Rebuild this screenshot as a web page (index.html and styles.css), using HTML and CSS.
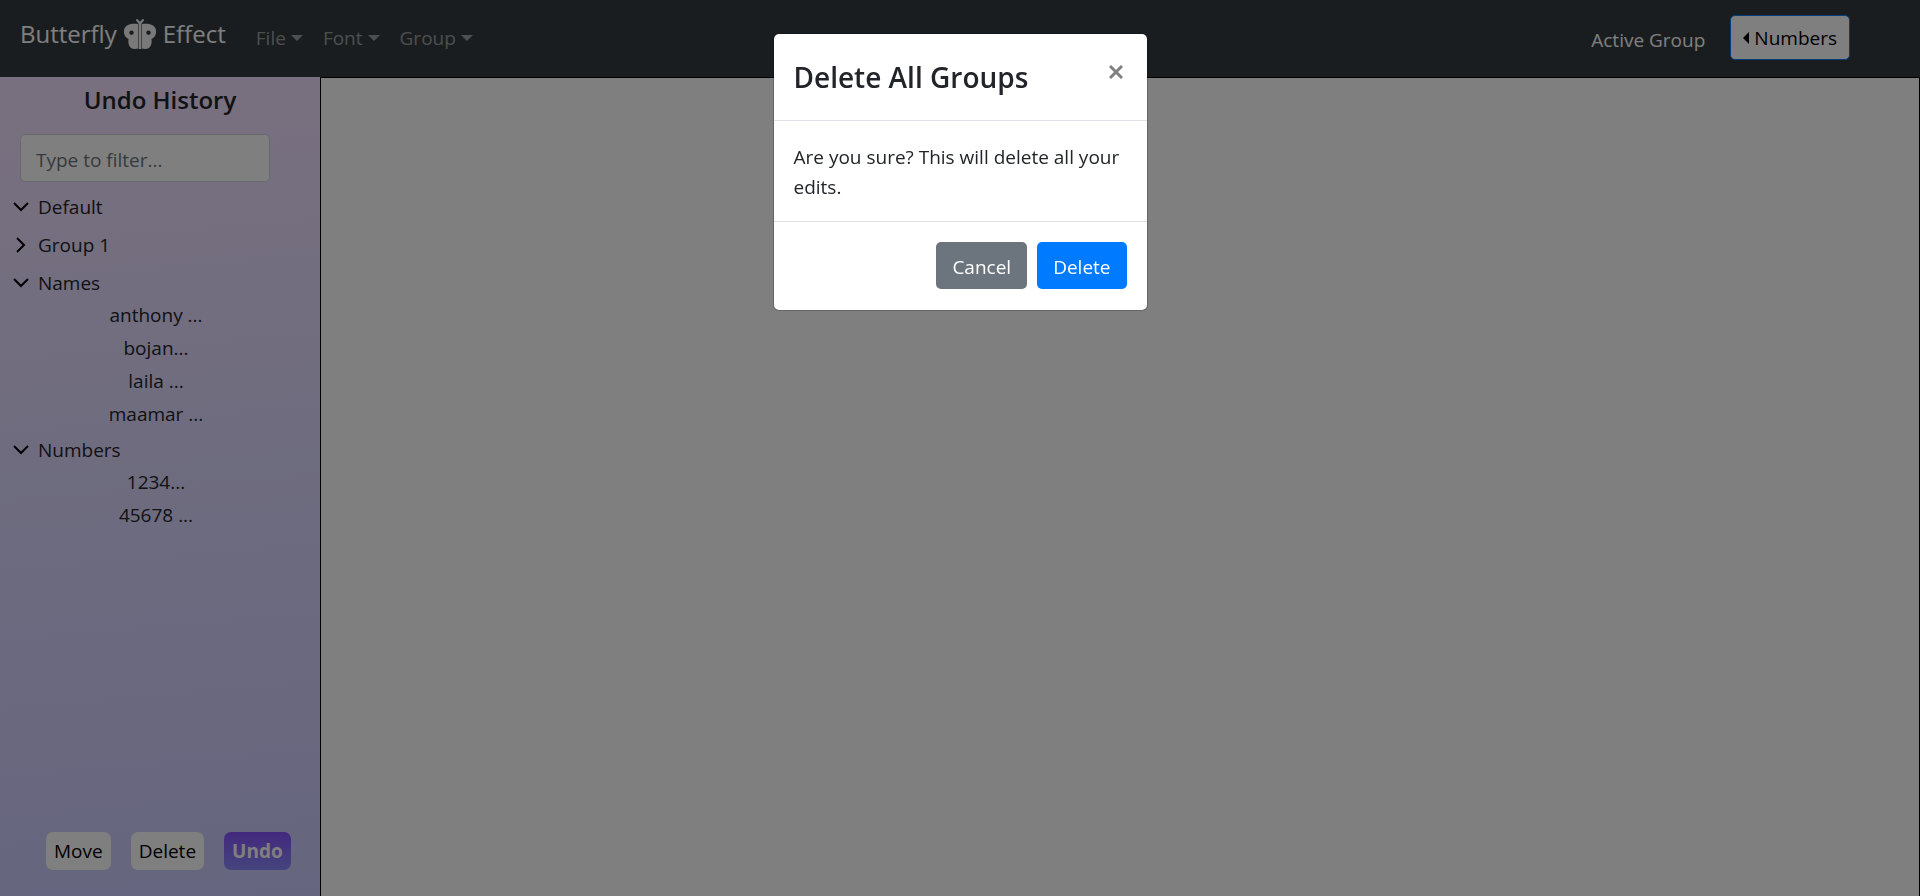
FILE: index.html
```html
<!DOCTYPE html>
<html lang="en">
<head>
<meta charset="utf-8">
<title>Butterfly Effect</title>
<link rel="stylesheet" href="styles.css">
</head>
<body>
<div class="app">
  <header class="navbar">
    <a class="brand" href="#">Butterfly
      <svg class="brand-icon" viewBox="0 0 34 32" aria-hidden="true">
        <path class="wing" fill-rule="evenodd" d="M15 6C11 5.500 8 5.500 5 7C2 8.500 .5 11 1 15C1.500 18 3 20 5.500 21C5 24 5.500 28 8 30C10 31.300 13 31 15 30.500ZM8.500 12.500a2.200 2.200 0 1 0 .01 0Z"/>
        <path class="wing" fill-rule="evenodd" d="M19 6C23 5.500 26 5.500 29 7C32 8.500 33.500 11 33 15C32.500 18 31 20 28.500 21C29 24 28.500 28 26 30C24 31.300 21 31 19 30.500ZM25.500 12.500a2.200 2.200 0 1 0 .01 0Z"/>
        <path class="wing" d="M15.600 4h2.800v27h-2.800z"/>
        <path class="antenna" d="M17 5.500L14 2M17 5.500L20 2"/>
      </svg>
      Effect</a>
    <nav class="menu">
      <button class="menu-item" type="button">File<span class="caret"></span></button>
      <button class="menu-item" type="button">Font<span class="caret"></span></button>
      <button class="menu-item" type="button">Group<span class="caret"></span></button>
    </nav>
    <div class="active-group">
      <span class="active-label">Active Group</span>
      <button class="group-button" type="button"><span class="caret-left"></span>Numbers</button>
    </div>
  </header>
  <div class="workspace">
    <aside class="sidebar">
      <h2 class="sidebar-title">Undo History</h2>
      <input class="filter" type="text" placeholder="Type to filter..." aria-label="Type to filter">
      <ul class="tree">
        <li><button class="group" type="button"><svg class="chevron" viewBox="0 0 16 16"><path d="M1 4l7 7 7-7"/></svg>Default</button></li>
        <li><button class="group" type="button"><svg class="chevron" viewBox="0 0 16 16"><path d="M4 1l7 7-7 7"/></svg>Group 1</button></li>
        <li><button class="group" type="button"><svg class="chevron" viewBox="0 0 16 16"><path d="M1 4l7 7 7-7"/></svg>Names</button>
          <ul class="edits">
            <li>anthony ...</li>
            <li>bojan...</li>
            <li>laila ...</li>
            <li>maamar ...</li>
          </ul>
        </li>
        <li><button class="group" type="button"><svg class="chevron" viewBox="0 0 16 16"><path d="M1 4l7 7 7-7"/></svg>Numbers</button>
          <ul class="edits">
            <li>1234...</li>
            <li>45678 ...</li>
          </ul>
        </li>
      </ul>
      <div class="actions">
        <button class="action" type="button">Move</button>
        <button class="action" type="button">Delete</button>
        <button class="action action-undo" type="button">Undo</button>
      </div>
    </aside>
    <main class="editor"></main>
  </div>
</div>
<div class="backdrop">
  <section class="modal" role="dialog" aria-modal="true" aria-labelledby="modal-title">
    <div class="modal-header">
      <h1 class="modal-title" id="modal-title">Delete All Groups</h1>
      <button class="close" type="button" aria-label="Close"><svg viewBox="0 0 14 14"><path d="M1 1l12 12M13 1L1 13"/></svg></button>
    </div>
    <p class="modal-body">Are you sure? This will delete all your edits.</p>
    <div class="modal-footer">
      <button class="btn btn-secondary" type="button">Cancel</button>
      <button class="btn btn-primary" type="button">Delete</button>
    </div>
  </section>
</div>
</body>
</html>
```

FILE: styles.css
```css
* { box-sizing: border-box; }

body {
  margin: 0;
  color: #212529;
  font: 19px/30px "Open Sans", "Noto Sans", sans-serif;
}

button, input { font: inherit; color: inherit; }
button { border: 0; background: none; padding: 0; }
ul { list-style: none; margin: 0; padding: 0; }

.app {
  display: flex;
  flex-direction: column;
  height: 100vh;
}

.navbar {
  display: flex;
  align-items: center;
  height: 77px;
  padding: 0 70px 2px 20px;
  background: #343a40;
}

.brand {
  display: flex;
  align-items: center;
  gap: 6px;
  padding-bottom: 8px;
  color: #fff;
  font-size: 24px;
  text-decoration: none;
}
.brand-icon { width: 34px; height: 32px; }
.wing { fill: #f2f2f2; }
.antenna { fill: none; stroke: #f2f2f2; stroke-width: 2; stroke-linecap: round; }

.menu {
  display: flex;
  gap: 20px;
  margin-left: 30px;
  color: rgba(255, 255, 255, .5);
}
.menu-item { display: flex; align-items: center; gap: 5px; }
.caret {
  border: 6px solid transparent;
  border-top-color: currentColor;
  border-bottom: 0;
}

.active-group {
  display: flex;
  align-items: center;
  gap: 25px;
  margin-left: auto;
}
.active-label { color: #fff; padding-top: 4px; }
.group-button {
  display: flex;
  align-items: center;
  gap: 5px;
  height: 45px;
  padding: 0 12px;
  border: 1px solid #007bff;
  border-radius: 5px;
  background: #fff;
  color: #000;
}
.caret-left {
  border: 6px solid transparent;
  border-right-color: currentColor;
  border-left: 0;
}

.workspace { display: flex; flex: 1; min-height: 0; }

.sidebar {
  display: flex;
  flex-direction: column;
  width: 320px;
  background: linear-gradient(175deg, #f3e1ff, #e2dbff 35%, #cbcbff);
}
.sidebar-title {
  margin: 8px 0 19px;
  font-size: 24px;
  font-weight: 600;
  line-height: 30px;
  text-align: center;
}
.filter {
  width: 250px;
  height: 48px;
  margin-left: 20px;
  padding: 4px 15px 0;
  border: 1px solid #ced4da;
  border-radius: 5px;
  background: #fff;
}
.filter::placeholder { color: #6c757d; opacity: 1; }

.tree { padding: 6px 21px 0 13px; }
.group {
  display: flex;
  align-items: center;
  gap: 9px;
  height: 38px;
}
.chevron {
  width: 16px;
  height: 16px;
  fill: none;
  stroke: #000;
  stroke-width: 2;
}
.edits { margin-top: -3px; text-align: center; line-height: 33px; }

.actions {
  display: flex;
  gap: 20px;
  margin: auto 0 26px 46px;
}
.action {
  height: 38px;
  padding: 0 8px;
  border-radius: 7px;
  background: #fff;
  color: #000;
}
.action-undo {
  background: linear-gradient(#8652fa, #8a8afc);
  color: #fff;
  font-weight: 700;
}

.editor {
  flex: 1;
  border: 1px solid #000;
  border-bottom: 0;
  background: #fff;
}

.backdrop {
  position: fixed;
  inset: 0;
  padding-top: 33px;
  background: rgba(0, 0, 0, .5);
}
.modal {
  width: 375px;
  margin: 0 auto;
  border: 1px solid rgba(0, 0, 0, .2);
  border-radius: 6px;
  background: #fff;
  background-clip: padding-box;
}
.modal-header {
  display: flex;
  align-items: flex-start;
  justify-content: space-between;
  padding: 20px;
  border-bottom: 1px solid #dee2e6;
}
.modal-title {
  margin: 0;
  font-size: 28px;
  font-weight: 600;
  line-height: 46px;
}
.close { padding: 11px 4px; line-height: 0; }
.close svg {
  width: 14px;
  height: 14px;
  fill: none;
  stroke: #808080;
  stroke-width: 3;
}
.modal-body { margin: 0; padding: 21px 20px 19px; }
.modal-footer {
  display: flex;
  justify-content: flex-end;
  gap: 10px;
  padding: 20px 20px 21px;
  border-top: 1px solid #dee2e6;
}
.btn {
  height: 47px;
  padding: 2px 16px 0;
  border-radius: 5px;
  color: #fff;
}
.btn-secondary { background: #6c757d; }
.btn-primary { background: #007bff; }
```
